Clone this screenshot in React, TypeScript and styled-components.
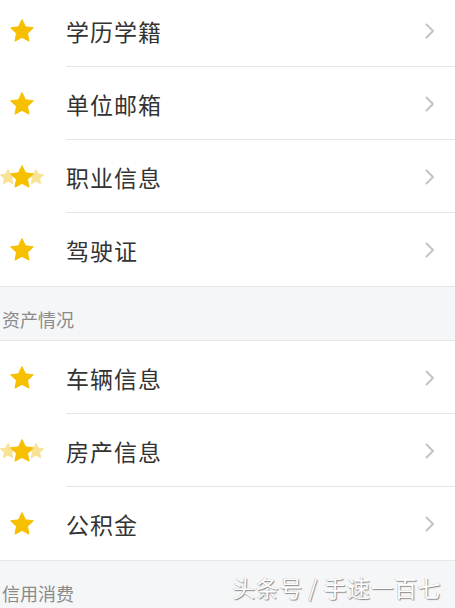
import React from 'react'
import styled, { createGlobalStyle } from 'styled-components'

const Global = createGlobalStyle`
  html, body {
    margin: 0;
    padding: 0;
    background: #fff;
    overflow: hidden;
  }
  body {
    font-family: 'Noto Sans CJK SC', 'Noto Sans', sans-serif;
  }
`

type Item = { title: string; stars: 1 | 3 }

const groups: { header?: string; items: Item[] }[] = [
  {
    items: [
      { title: '学历学籍', stars: 1 },
      { title: '单位邮箱', stars: 1 },
      { title: '职业信息', stars: 3 },
      { title: '驾驶证', stars: 1 },
    ],
  },
  {
    header: '资产情况',
    items: [
      { title: '车辆信息', stars: 1 },
      { title: '房产信息', stars: 3 },
      { title: '公积金', stars: 1 },
    ],
  },
  { header: '信用消费', items: [] },
]

const STAR = 'M12 1.5l3.1 6.6 7.2.9-5.3 5 1.4 7.2L12 17.7l-6.4 3.5 1.4-7.2-5.3-5 7.2-.9z'

function Star({ size, fill }: { size: number; fill: string }) {
  return (
    <svg width={size} height={size} viewBox="0 0 24 24">
      <path d={STAR} fill={fill} stroke={fill} strokeWidth="1" strokeLinejoin="round" />
    </svg>
  )
}

function Stars({ count }: { count: 1 | 3 }) {
  if (count === 1) {
    return (
      <IconCell>
        <Star size={26} fill="#f6c000" />
      </IconCell>
    )
  }
  return (
    <IconCell>
      <Triple>
        <Side side="left">
          <Star size={18} fill="#f8e293" />
        </Side>
        <Middle>
          <Star size={26} fill="#f6c000" />
        </Middle>
        <Side side="right">
          <Star size={18} fill="#f8e293" />
        </Side>
      </Triple>
    </IconCell>
  )
}

function Chevron() {
  return (
    <svg width="12" height="18" viewBox="0 0 12 18">
      <polyline
        points="2.5,2.5 9,9 2.5,15.5"
        fill="none"
        stroke="#c4c4c4"
        strokeWidth="2"
        strokeLinecap="round"
        strokeLinejoin="round"
      />
    </svg>
  )
}

export default function App() {
  return (
    <>
      <Global />
      <Page>
        {groups.map((g, gi) => (
          <div key={gi}>
            {g.header && <Header>{g.header}</Header>}
            {g.items.map((it, i) => (
              <Row key={it.title}>
                <Stars count={it.stars} />
                <Content last={i === g.items.length - 1}>
                  <Title>{it.title}</Title>
                  <Chevron />
                </Content>
              </Row>
            ))}
          </div>
        ))}
        <Watermark>头条号 / 手速一百七</Watermark>
      </Page>
    </>
  )
}

const Page = styled.div({
  position: 'relative',
  width: 455,
  height: 608,
  overflow: 'hidden',
  '> div:first-child': {
    marginTop: -6,
  },
})

const Row = styled.div({
  display: 'flex',
  alignItems: 'stretch',
  height: 73,
  background: '#fff',
})

const IconCell = styled.div({
  width: 44,
  marginRight: 22,
  display: 'flex',
  alignItems: 'center',
  justifyContent: 'center',
  flexShrink: 0,
})

const Triple = styled.div({
  display: 'flex',
  alignItems: 'center',
})

const Side = styled.div<{ side: 'left' | 'right' }>(({ side }) => ({
  display: 'flex',
  position: 'relative',
  zIndex: 0,
  marginRight: side === 'left' ? -8 : 0,
  marginLeft: side === 'right' ? -8 : 0,
}))

const Middle = styled.div({
  display: 'flex',
  position: 'relative',
  zIndex: 1,
})

const Content = styled.div<{ last: boolean }>(({ last }) => ({
  flex: 1,
  display: 'flex',
  alignItems: 'center',
  justifyContent: 'space-between',
  paddingRight: 19,
  paddingTop: 1,
  borderBottom: last ? 'none' : '1px solid #e6e6e6',
}))

const Title = styled.span({
  fontSize: 23,
  color: '#333',
  letterSpacing: 1,
})

const Header = styled.div({
  height: 55,
  boxSizing: 'border-box',
  background: '#f5f6f8',
  borderTop: '1px solid #e6e6e6',
  borderBottom: '1px solid #e6e6e6',
  padding: '18px 0 0 2px',
  fontSize: 18,
  color: '#8a8a8a',
  lineHeight: '28px',
})

const Watermark = styled.div({
  position: 'absolute',
  right: 14,
  bottom: 4,
  fontSize: 23,
  color: '#fff',
  letterSpacing: 0.5,
  textShadow: '1px 1px 1px #8a8a8a, -0.5px -0.5px 0 #b0b0b0',
})
